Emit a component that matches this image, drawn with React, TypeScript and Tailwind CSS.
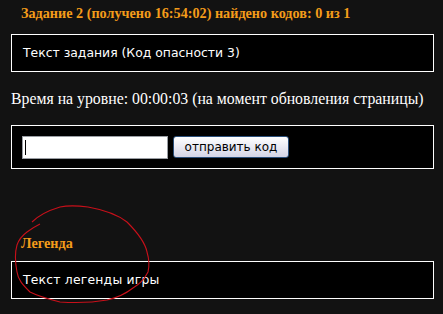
import React from "react";

const serif = { fontFamily: '"Liberation Serif", "DejaVu Serif", serif' };

function Box({ children, className = "" }: { children: React.ReactNode; className?: string }) {
  return (
    <div className={`mx-[11px] w-[423px] border border-white bg-black ${className}`}>
      {children}
    </div>
  );
}

export default function App() {
  return (
    <div className="relative h-[314px] w-[443px] overflow-hidden bg-[#121212] text-white">
      <div
        className="h-[34px] pl-[21px] pt-[5px] text-[14.2px] font-bold leading-[16px] text-[#f49c1a]"
        style={serif}
      >
        Задание 2 (получено 16:54:02) найдено кодов: 0 из 1
      </div>

      <Box className="flex h-[38px] items-center pl-[11px] font-['DejaVu_Sans',sans-serif] text-[12.4px]">
        Текст задания (Код опасности 3)
      </Box>

      <div
        className="h-[53px] pl-[11px] pt-[18px] text-[15.8px] leading-[18px] text-white"
        style={serif}
      >
        Время на уровне: 00:00:03 (на момент обновления страницы)
      </div>

      <Box className="flex h-[44px] items-center gap-[5px] pl-[10px]">
        <div className="flex h-[23px] w-[146px] items-center border border-[#9a9ea4] bg-white pl-[2px]">
          <div className="h-[15px] w-px bg-black" />
        </div>
        <button className="h-[22px] w-[116px] rounded-[3px] border border-[#2b4f7a] bg-gradient-to-b from-white to-[#d4d4e6] font-['DejaVu_Sans',sans-serif] text-[12px] leading-[18px] text-black">
          отправить код
        </button>
      </Box>

      <div
        className="h-[92px] pl-[21px] pt-[66px] text-[14.2px] font-bold leading-[16px] text-[#f49c1a]"
        style={serif}
      >
        Легенда
      </div>

      <Box className="flex h-[38px] items-center pl-[11px] font-['DejaVu_Sans',sans-serif] text-[12.4px] tracking-[0.2px]">
        Текст легенды игры
      </Box>

      <svg
        className="pointer-events-none absolute left-0 top-0"
        width="443"
        height="314"
        viewBox="0 0 443 314"
        fill="none"
      >
        <path
          d="M32 222 C40 214 50 210 60 207 C70 205 80 206 88 207 C105 210 118 215 127 222 C137 232 145 242 147 252 C150 262 149 268 148 272 C144 280 140 284 133 288 C124 295 116 298 107 300 C90 303 75 303 60 302 C48 299 38 296 30 292 C23 285 18 280 17 272 C15 262 15 252 17 245 C19 239 23 235 27 232 C31 229 36 226 40 224"
          stroke="#c8101a"
          strokeWidth="1.1"
        />
      </svg>
    </div>
  );
}
